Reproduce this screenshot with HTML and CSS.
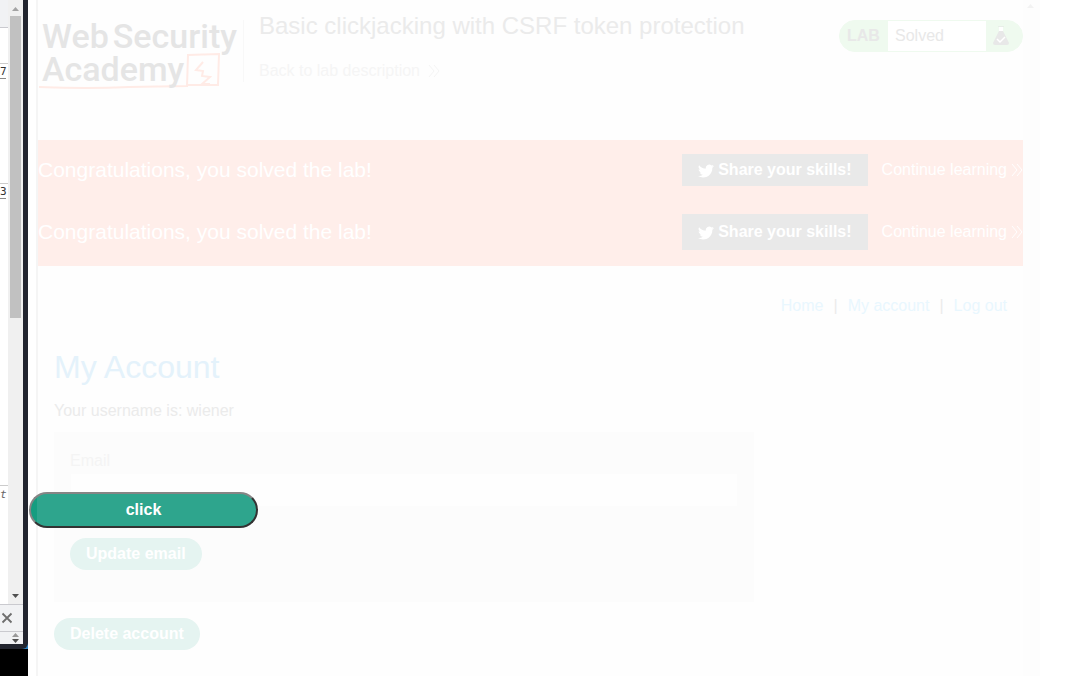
FILE: index.html
```html
<!DOCTYPE html>
<html lang="en">
<head>
<meta charset="utf-8">
<title>Basic clickjacking with CSRF token protection</title>
<link rel="stylesheet" href="styles.css">
</head>
<body>
<svg class="defs" aria-hidden="true">
  <symbol id="chevrons" viewBox="0 0 12 14"><path d="M1 1l5 6-5 6M6 1l5 6-5 6" fill="none" stroke="currentColor"/></symbol>
  <symbol id="bird" viewBox="0 0 24 24"><path fill="currentColor" d="M24 4.6c-.9.4-1.8.7-2.8.8 1-.6 1.8-1.6 2.2-2.7-1 .6-2 1-3.1 1.2a4.9 4.9 0 0 0-8.4 4.5C7.700 8.200 4.100 6.300 1.700 3.200a4.900 4.900 0 0 0 1.500 6.600c-.8 0-1.600-.2-2.200-.6v.1c0 2.400 1.700 4.400 3.900 4.800-.7.2-1.500.2-2.200.1a4.900 4.900 0 0 0 4.600 3.400A9.900 9.900 0 0 1 0 19.500 14 14 0 0 0 7.500 21.700c9.100 0 14-7.500 14-14v-.6c1-.7 1.800-1.600 2.500-2.500z"/></symbol>
</svg>
<aside class="side">
  <div class="pane">
    <div class="pane-body">
      <div class="list">
        <div class="list-head"></div>
        <div class="cell blank"></div>
        <div class="cell first"><span class="num">7</span></div>
        <div class="cell second"><span class="num">3</span></div>
        <div class="cell last">t</div>
      </div>
      <div class="scroll">
        <svg class="arrow" viewBox="0 0 15 16"><path d="M4 11l3.500-4 3.500 4z" fill="#a3a3a3"/></svg>
        <div class="thumb"></div>
        <svg class="arrow" viewBox="0 0 15 16"><path d="M4 6h7l-3.500 4z" fill="#505050"/></svg>
      </div>
    </div>
    <button class="close" aria-label="Close"><svg viewBox="0 0 12 12"><path d="M1.500 1.500l9 9m0-9l-9 9" stroke="#6e6e6e" stroke-width="1.800"/></svg></button>
    <div class="stepper"><svg viewBox="0 0 15 12"><path d="M4 5l3.500-4L11 5z" fill="#999"/><path d="M4 7h7l-3.500 4z" fill="#505050"/></svg></div>
  </div>
</aside>
<div class="stage">
  <div class="frame">
    <main class="page">
      <header class="header">
        <div class="logo">
          <div class="words"><span>Web</span><span>Security</span></div>
          <div class="words">Academy</div>
          <svg class="mark" viewBox="0 0 200 40"><path d="M0 35q50 2 90 0l58-1 1-31 31-1-1 31h-30" fill="none" stroke="#ffebe6" stroke-width="2"/><path d="M164 10l-7 8 7 1-1 5 8 1-8 7h8" fill="none" stroke="#ffebe6" stroke-width="2"/></svg>
        </div>
        <div class="title">
          <h2>Basic clickjacking with CSRF token protection</h2>
          <a class="back" href="#">Back to lab description <svg class="chev"><use href="#chevrons"/></svg></a>
        </div>
        <div class="badge"><b>LAB</b><span class="status">Solved</span>
          <svg class="flask" viewBox="0 0 16 20"><path d="M5 0h6v1H5z" fill="#e8eee8"/><path d="M6 1h4v4H6z" fill="#fff"/><path d="M6 5h4l6 12q0 2-2 2H2q-2 0-2-2z" fill="#e8e8e8"/><path d="M4 13l3 3 5-5" fill="none" stroke="#fff" stroke-width="1.500"/></svg>
        </div>
      </header>
      <section class="banner">
        <div class="row"><p>Congratulations, you solved the lab!</p><button class="share"><svg class="bird"><use href="#bird"/></svg>Share your skills!</button><a href="#">Continue learning <svg class="chev"><use href="#chevrons"/></svg></a></div>
        <div class="row tall"><p>Congratulations, you solved the lab!</p><button class="share"><svg class="bird"><use href="#bird"/></svg>Share your skills!</button><a href="#">Continue learning <svg class="chev"><use href="#chevrons"/></svg></a></div>
      </section>
      <section class="content">
        <nav class="nav"><a href="#">Home</a><span>|</span><a href="#">My account</a><span>|</span><a href="#">Log out</a></nav>
        <h1>My Account</h1>
        <p class="user">Your username is: wiener</p>
        <form class="form">
          <label for="email">Email</label>
          <input id="email" type="email">
          <button class="pill" type="button">Update email</button>
        </form>
        <button class="pill" type="button">Delete account</button>
      </section>
    </main>
    <div class="frame-scroll"><svg class="arrow" viewBox="0 0 15 16"><path d="M4 8l3.500-4 3.500 4z" fill="#f2f2f2"/></svg></div>
  </div>
  <button class="click">click</button>
</div>
</body>
</html>
```
FILE: styles.css
```css
* { box-sizing: border-box; }
body {
  margin: 0;
  min-height: 100vh;
  display: flex;
  overflow: hidden;
  background: #fff;
  font: 16px/20px "Liberation Sans", Arial, sans-serif;
}
a { text-decoration: none; }
h1, h2, p { margin: 0; font-weight: normal; }
button { font: inherit; border: 0; padding: 0; }
svg { display: block; }
.defs { position: absolute; width: 0; height: 0; }

.side {
  width: 28px;
  height: 100vh;
  display: flex;
  flex-direction: column;
  padding-bottom: 27px;
  background: linear-gradient(#2b82c4, #2b82c4) 0 0 / 100% calc(100% - 27px) no-repeat #000;
}
.pane {
  flex: 1;
  display: flex;
  flex-direction: column;
  border: solid #22252f;
  border-width: 0 5px 5px 0;
  border-radius: 0 0 6px 0;
  background: #f1f2f4;
  overflow: hidden;
}
.pane-body { flex: 1; display: flex; background: #fff; }
.list {
  width: 8px;
  display: flex;
  flex-direction: column;
  font: 11px/18px "DejaVu Sans Mono", monospace;
  color: #333;
  overflow: hidden;
}
.list-head { height: 28px; background: #f1f2f4; border-bottom: 1px solid #cacacf; }
.cell { border-bottom: 1px solid #ccc; }
.blank { height: 36px; }
.first { height: 120px; }
.second { height: 302px; }
.last { flex: 1; border: 0; color: #666; font-style: italic; }
.num { display: block; line-height: 13px; margin-top: 1px; border-bottom: 1px solid #888; width: 6px; }
.scroll {
  width: 15px;
  display: flex;
  flex-direction: column;
  background: #f0f0f0;
}
.arrow { width: 15px; height: 16px; }
.thumb { height: 302px; margin: 0 2px auto; background: #c1c1c1; }
.close {
  height: 27px;
  padding-left: 1px;
  background: #f1f2f4;
  border-top: 1px solid #cacacf;
}
.close svg { width: 12px; height: 12px; }
.stepper { height: 13px; padding-left: 8px; border-top: 1px solid #cacacf; }
.stepper svg { width: 15px; height: 12px; }

.stage { position: relative; flex: 1; padding: 0 51px 0 8px; height: 100vh; }
.frame { display: flex; height: 100%; border-left: 2px solid #f5f5f5; background: #fefefe; }
.page { flex: 1; background: #fefefe; }
.frame-scroll { width: 17px; background: #fdfdfd; }

.header { display: flex; align-items: flex-start; height: 140px; padding-top: 20px; }
.logo {
  position: relative;
  z-index: 0;
  width: 206px;
  height: 62px;
  padding-left: 4px;
  border-right: 1px solid #f8f8f8;
  color: #e5e5e5;
  font: 500 34px/33px Roboto, sans-serif;
}
.words { display: flex; gap: 4px; }
.mark { position: absolute; left: 1px; top: 32px; width: 200px; height: 40px; z-index: -1; }
.title { flex: 1; padding-left: 15px; }
.title h2 { font-size: 24px; line-height: 28px; margin-top: -8px; color: #ebebeb; }
.back { display: flex; align-items: center; gap: 8px; margin-top: 21px; color: #f5f5f5; }
.chev { width: 12px; height: 14px; }
.badge {
  display: flex;
  align-items: center;
  height: 32px;
  border: 1px solid #effaef;
  border-radius: 16px;
  background: #effaef;
  color: #e8e8e8;
  overflow: hidden;
}
.badge b { width: 48px; padding-left: 7px; }
.status { width: 98px; padding-left: 7px; background: #fff; line-height: 30px; }
.flask { width: 16px; height: 20px; margin: 0 13px 0 7px; }

.banner { background: #ffeeea; color: #fff; }
.row { display: flex; align-items: center; height: 60px; }
.row p { flex: 1; font-size: 21px; line-height: 28px; }
.row a { display: flex; align-items: center; gap: 4px; margin-left: 14px; color: #fff; }
.share {
  display: flex;
  align-items: center;
  gap: 4px;
  height: 32px;
  padding: 0 16px;
  background: #e9e9e9;
  color: #fff;
  font-weight: bold;
}
.bird { width: 16px; height: 16px; margin-top: 2px; }
.tall { height: 66px; padding-bottom: 2px; }
.tall .share { height: 36px; }

.content { padding: 30px 16px 0; }
.nav { display: flex; justify-content: flex-end; gap: 10px; }
.nav a { color: #e9f7fe; }
.nav span { color: #ebebeb; }
h1 { margin-top: 31px; font-size: 32px; line-height: 40px; color: #e4f2fb; }
.user { margin: 14px 0 11px; color: #ebebeb; }
.form { max-width: 700px; height: 170px; margin-bottom: 16px; padding: 18px 16px; background: #fcfcfc; }
.form label { display: block; line-height: 22px; color: #f4f4f4; }
.form input {
  display: block;
  width: 100%;
  height: 34px;
  margin: 1px 0 31px;
  border: 1px solid #fcfcfc;
  background: #fefefe;
}
.pill {
  height: 32px;
  padding: 0 16px;
  border-radius: 16px;
  background: #e5f4f1;
  color: #fff;
  font-weight: bold;
}
.click {
  position: absolute;
  left: 1px;
  top: 492px;
  width: 229px;
  height: 36px;
  border: 2px solid;
  border-color: #858585 #333 #333 #858585;
  border-radius: 18px;
  background: linear-gradient(90deg, #159d80 6px, #2ea58d 6px);
  color: #fff;
  font-weight: bold;
}
```
